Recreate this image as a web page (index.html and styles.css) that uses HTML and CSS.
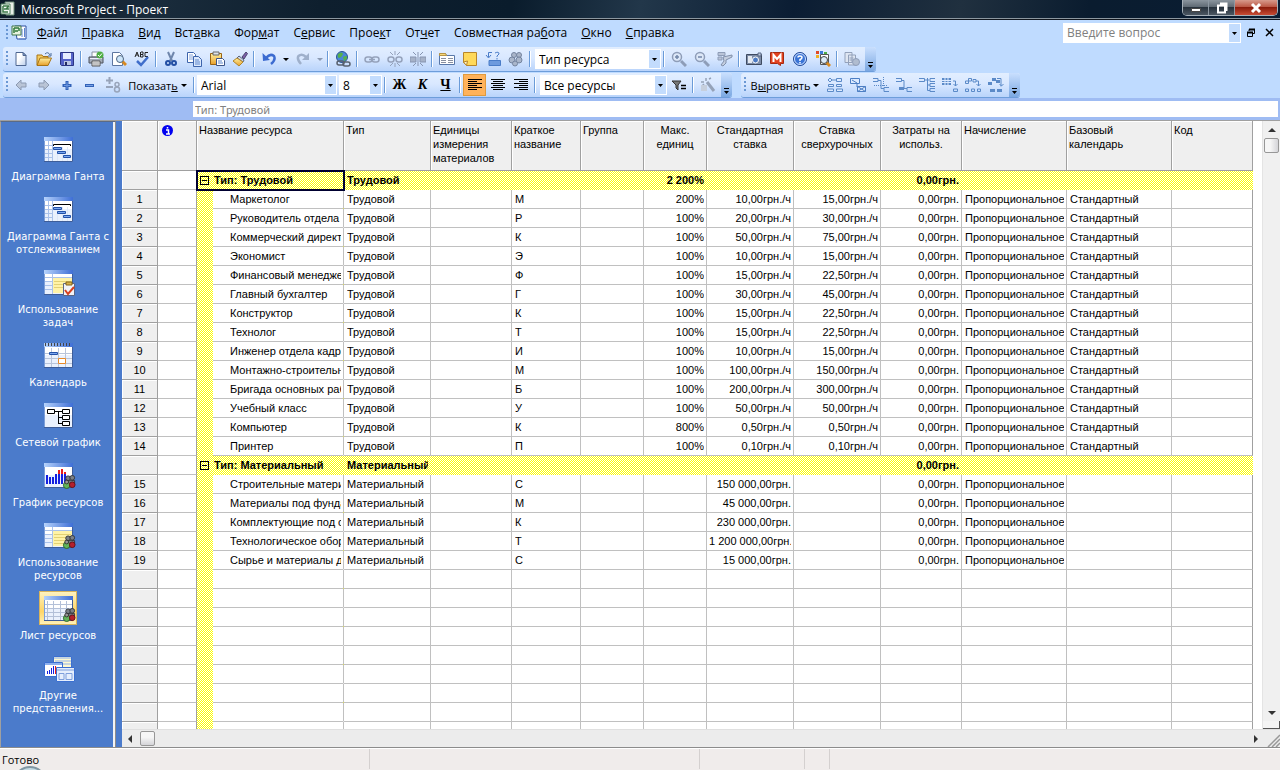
FILE: index.html
```
<!DOCTYPE html>
<html lang="ru">
<head>
    <meta charset="UTF-8">
    <meta name="viewport" content="width=device-width, initial-scale=1.0">
    <title>Microsoft Project - Проект</title>
    <link rel="stylesheet" href="styles.css">
</head>
<body>

<!-- icons -->
<svg class="sprite" aria-hidden="true">
  <defs>
    <linearGradient id="g-bar" x1="0" y1="0" x2="1" y2="0"><stop offset="0" stop-color="#b5d2fb"/><stop offset="1" stop-color="#3f6fd6"/></linearGradient>
    <linearGradient id="g-paper" x1="0" y1="0" x2="1" y2="1"><stop offset="0.4" stop-color="#fff"/><stop offset="1" stop-color="#b9cdec"/></linearGradient>
    <linearGradient id="g-gold" x1="0" y1="0" x2="0" y2="1"><stop offset="0" stop-color="#fff0a0"/><stop offset="1" stop-color="#e79f2a"/></linearGradient>
  </defs>
  <symbol id="i-app" viewBox="0 0 16 16"><path d="M5 1h9v13H6z" fill="#e8efe8" stroke="#6c8c78"/><path d="M1 3h9v10H1z" fill="#f4fbf4" stroke="#4f7e5c"/><path d="M3 5h6M3 5v6h5M4 8h5M9 5l-3 3" stroke="#3c7a48" stroke-width="1.5" fill="none"/></symbol>
  <symbol id="i-doc" viewBox="0 0 16 16"><path d="M4 1h11v13H6z" fill="#fff" stroke="#2c4f9e"/><path d="M13.500 3v9M11 4v8M8 14h7" stroke="#5c86d2"/><path d="M1 1h9v9H1z" fill="#e8f3e0" stroke="#3e7648"/><path d="M3 3h5M3 3v5M4 6h3M8 3v3" stroke="#317a3b" stroke-width="1.500" fill="none"/></symbol>
  <symbol id="i-new" viewBox="0 0 16 16"><path d="M3 1.500h7l3 3v10H3z" fill="url(#g-paper)" stroke="#4e6690"/><path d="M10 1.500v3h3z" fill="#8fa8d0" stroke="#4e6690"/></symbol>
  <symbol id="i-open" viewBox="0 0 16 16"><path d="M1 14V4h5l1 1.500h5V7" fill="#f4cc62" stroke="#a87414"/><path d="M1 14.500L4 7h11.500L12 14.500z" fill="url(#g-gold)" stroke="#a87414"/><path d="M9 3q3-3 5 1M15 2v3h-3" stroke="#4a6c9c" fill="none"/></symbol>
  <symbol id="i-save" viewBox="0 0 16 16"><path d="M1.500 1.500h13v13h-12l-1-1z" fill="#5462c8" stroke="#2a3584"/><path d="M4 2h8v6H4z" fill="#e6eeff"/><path d="M5 10h7v4H5z" fill="#b9c5e4"/><path d="M6 11h2v3H6z" fill="#222a60"/></symbol>
  <symbol id="i-print" viewBox="0 0 16 16"><path d="M4 1h7l1 5H4z" fill="#fff" stroke="#8892a4"/><path d="M1 6h14v6H1z" fill="#a3abb8" stroke="#4c535e"/><path d="M2 7.500h12" stroke="#eef"/><path d="M4 10h8v5H4z" fill="#fff" stroke="#555"/><path d="M5 12h6M5 14h6" stroke="#888"/><circle cx="12" cy="4" r="3.500" fill="#4fae45"/><path d="M10 4l1.500 1.500L14 2.500" stroke="#fff" fill="none"/></symbol>
  <symbol id="i-preview" viewBox="0 0 16 16"><path d="M1.500 1.500h7l3 3v10h-10z" fill="#fff" stroke="#5d76a0"/><path d="M11 10l4 4" stroke="#d88920" stroke-width="3"/><circle cx="9" cy="8" r="3.500" fill="#cfe7fb" stroke="#4d6480"/></symbol>
  <symbol id="i-spell" viewBox="0 0 16 16"><path d="M1 6l2-5 2 5M2 4h2M6.500 1v5H9V3.500H7M9 3V1H7M14 1.500h-3v4h3" fill="none" stroke="#222"/><path d="M3 10l4 4 7-8" stroke="#3f6ecb" stroke-width="2.500" fill="none"/></symbol>
  <symbol id="i-cut" viewBox="0 0 16 16"><path d="M5 1l4 9M11 1L7 10" stroke="#6f86ac" stroke-width="2"/><circle cx="5" cy="12" r="2" fill="none" stroke="#234fa4" stroke-width="2"/><circle cx="11" cy="12" r="2" fill="none" stroke="#234fa4" stroke-width="2"/></symbol>
  <symbol id="i-copy" viewBox="0 0 16 16"><path d="M1.500 1.500h6l2 2v8h-8z" fill="#fff" stroke="#3d64ac"/><path d="M3 4h4M3 6h4M3 8h4" stroke="#86a4da"/><path d="M7.500 5.500h5l3 3v7h-8z" fill="#dbe8fc" stroke="#3d64ac"/><path d="M9 9h4M9 11h5M9 13h5" stroke="#5d86cc"/></symbol>
  <symbol id="i-paste" viewBox="0 0 16 16"><path d="M1.500 2.500h11v11h-11z" fill="url(#g-gold)" stroke="#9a6414"/><path d="M4 1h6v3H4z" fill="#dce2ea" stroke="#666"/><path d="M7.500 7.500h6l2 2v5h-8z" fill="#fff" stroke="#3d5588"/><path d="M9 10h4M9 12h5" stroke="#5d86cc"/></symbol>
  <symbol id="i-brush" viewBox="0 0 16 16"><path d="M10 6l4-5 1.500 1.500L12 8z" fill="#7d5fa8" stroke="#4c4870"/><path d="M7 5l5 4-1 2-6-4z" fill="#cdd5e4" stroke="#59647c"/><path d="M5 7l6 4-4 4-6-5z" fill="url(#g-gold)" stroke="#b1852a"/></symbol>
  <symbol id="i-undo" viewBox="0 0 16 16"><path d="M5 7q4-5 8-2 2 4-3 8" stroke="#3c6bd0" stroke-width="2.500" fill="none"/><path d="M1.500 2l.5 8 7-1z" fill="#3c6bd0"/></symbol>
  <symbol id="i-redo" viewBox="0 0 16 16"><path d="M11 6Q7 2 3.500 5 1.500 8 6 13" stroke="#9fb0cb" stroke-width="2.500" fill="none"/><path d="M14 2v7H7z" fill="#9fb0cb"/></symbol>
  <symbol id="i-globe" viewBox="0 0 16 16"><circle cx="7" cy="6" r="5.500" fill="#4a86d8" stroke="#2a5494"/><path d="M3 3q4-3 5 0-1 3-4 4-2-1-1-4M8 6q4-2 4 0 0 3-3 4z" fill="#55b04a"/><rect x="2" y="10" width="7" height="4" rx="2" fill="none" stroke="#59616e" stroke-width="1.500"/><rect x="8" y="11" width="7" height="4" rx="2" fill="none" stroke="#59616e" stroke-width="1.500"/></symbol>
  <symbol id="i-link" viewBox="0 0 16 16"><g fill="none" stroke="#95a2bb" stroke-width="1.500"><rect x="1" y="6" width="7" height="5" rx="2.500"/><rect x="8" y="6" width="7" height="5" rx="2.500"/><path d="M5 8.500h6"/></g></symbol>
  <symbol id="i-unlink" viewBox="0 0 16 16"><g fill="none" stroke="#95a2bb"><rect x="1" y="6" width="6" height="5" rx="2.500" stroke-width="1.500"/><rect x="9" y="6" width="6" height="5" rx="2.500" stroke-width="1.500"/><path d="M8 0v4M3 1l3 3M13 1l-3 3M8 12v4M6 12l-3 3M10 12l3 3"/></g></symbol>
  <symbol id="i-split" viewBox="0 0 16 16"><path d="M0 6h6v5H0zM10 6h6v5h-6z" fill="#a6b2c8" stroke="#8795b1"/><path d="M8 1v14M3 1l3 3M13 1l-3 3M3 15l3-3M13 15l-3-3" stroke="#8795b1"/></symbol>
  <symbol id="i-form" viewBox="0 0 16 16"><path d="M.5 2.500h6l1 2h8v9H.5z" fill="#fff" stroke="#5877a8"/><path d="M.5 2.500h6l1 2h-7z" fill="#f7d77a" stroke="#b89545"/><path d="M2 7.500h5M9 7.500h5M2 9.500h5M9 9.500h5M2 11.500h5M9 11.500h5" stroke="#888fa0"/></symbol>
  <symbol id="i-note" viewBox="0 0 16 16"><path d="M1.500 1.500h13v13h-10l-3-3z" fill="#ffd95a" stroke="#b8862a"/><path d="M1.500 11l4-1-1 4.500z" fill="#fff6cc" stroke="#b8862a"/></symbol>
  <symbol id="i-assign" viewBox="0 0 16 16"><path d="M7 1.500H3.500V6M1 4l2.500 3L6 4M10 2q4-2 4 1l-2 2v1M12 7v1.500" fill="none" stroke="#4a7cc8"/><path d="M4 9.500h11.500v5H4z" fill="#6d9ade" stroke="#4a7cc8"/></symbol>
  <symbol id="i-people" viewBox="0 0 16 16"><g fill="#aab6ca" stroke="#74849f"><circle cx="6" cy="4" r="2.500"/><circle cx="11" cy="4" r="2.500"/><circle cx="4" cy="9" r="3"/><circle cx="11" cy="9" r="3"/><circle cx="7" cy="12.500" r="2.500"/></g></symbol>
  <symbol id="i-zoomin" viewBox="0 0 16 16"><circle cx="6" cy="6" r="4.500" fill="#dde8f8" stroke="#8e9db8" stroke-width="1.500"/><path d="M10 10l5 5" stroke="#8e9db8" stroke-width="3"/><path d="M4 6h4M6 4v4" stroke="#7286a8" stroke-width="1.500"/></symbol>
  <symbol id="i-zoomout" viewBox="0 0 16 16"><circle cx="6" cy="6" r="4.500" fill="#dde8f8" stroke="#8e9db8" stroke-width="1.500"/><path d="M10 10l5 5" stroke="#8e9db8" stroke-width="3"/><path d="M4 6h4" stroke="#7286a8" stroke-width="1.500"/></symbol>
  <symbol id="i-goto" viewBox="0 0 16 16"><path d="M1 1.500h7v3H1zM1 6h4v3H1z" fill="#b9c4d8" stroke="#8e9db8"/><path d="M6 6l9-2v2L9 9v3l-3 3-2-1 3-4z" fill="#c4cedf" stroke="#8190ab"/></symbol>
  <symbol id="i-camera" viewBox="0 0 16 16"><path d="M.5 3.500h15v10H.5z" fill="#7c8ba6" stroke="#3e4a60"/><path d="M2 5h4v7H2z" fill="#e4e9f0"/><circle cx="9.500" cy="9" r="3" fill="#4b7ac4" stroke="#fff"/><path d="M12 2h3v3h-3z" fill="#c3cddd" stroke="#5b6b88"/></symbol>
  <symbol id="i-m" viewBox="0 0 16 16"><path d="M1.500 1.500h13v11h-3v2l-3-2h-7z" fill="#e2421f" stroke="#a52a12"/><path d="M4.500 11V4L8 8l3.500-4v7" fill="none" stroke="#fff" stroke-width="2"/></symbol>
  <symbol id="i-help" viewBox="0 0 16 16"><circle cx="8" cy="8" r="6.500" fill="#3a74d6" stroke="#234a96"/><circle cx="8" cy="8" r="5.500" fill="none" stroke="#cfe0ff"/><path d="M6 6.500Q6 5 8 5t2 1.500-2 2V10M8 11v1.500" fill="none" stroke="#fff" stroke-width="1.500"/></symbol>
  <symbol id="i-find" viewBox="0 0 16 16"><path d="M5.500 3.500h8v10h-8z" fill="#fff" stroke="#555"/><path d="M1 0h3v3H1z" fill="#e04a28"/><path d="M5 0h3v3H5z" fill="#3c78d8"/><path d="M1 4h3v3H1z" fill="#f0b020"/><path d="M9 1h3v2H9z" fill="#4cab46"/><path d="M11 11l4 4" stroke="#d88920" stroke-width="3"/><circle cx="9" cy="9" r="3.500" fill="#dcebf8" stroke="#444"/></symbol>
  <symbol id="i-copyweb" viewBox="0 0 16 16"><path d="M1 1.500h7v10H1zM4.500 4h7v10h-7z" fill="#dfe6f2" stroke="#93a1ba"/><path d="M5.500 7h4M5.500 9h4" stroke="#93a1ba"/><circle cx="12" cy="11" r="3.500" fill="#b0bccf" stroke="#8e9db8"/></symbol>
  <symbol id="i-left" viewBox="0 0 16 16"><path d="M3 8l5-5v3h5v4H8v3z" fill="#b9c4d6" stroke="#8c9ab2"/></symbol>
  <symbol id="i-right" viewBox="0 0 16 16"><path d="M13 8L8 3v3H3v4h5v3z" fill="#b9c4d6" stroke="#8c9ab2"/></symbol>
  <symbol id="i-plus" viewBox="0 0 16 16"><path d="M8 4v9M3.500 8.500h9" stroke="#3262b8" stroke-width="3"/><path d="M8 5v7M5 8.500h6" stroke="#6e98e0"/></symbol>
  <symbol id="i-minus" viewBox="0 0 16 16"><path d="M3 8.500h9" stroke="#3262b8" stroke-width="3"/><path d="M4 8.500h7" stroke="#79a2e6"/></symbol>
  <symbol id="i-indic" viewBox="0 0 16 16"><path d="M4.500 0v7M1 3.500h7M1 10h7" stroke="#98a4ba" stroke-width="2"/><circle cx="12" cy="7.500" r="2" fill="none" stroke="#98a4ba" stroke-width="1.500"/><circle cx="12" cy="12.500" r="2.500" fill="none" stroke="#98a4ba" stroke-width="1.500"/></symbol>
  <symbol id="i-aleft" viewBox="0 0 16 16"><path d="M1 2.500h14M1 4.500h9M1 6.500h14M1 8.500h9M1 10.500h14M1 12.500h9" stroke="#000"/></symbol>
  <symbol id="i-acenter" viewBox="0 0 16 16"><path d="M1 2.500h14M3 4.500h10M1 6.500h14M3 8.500h10M1 10.500h14M3 12.500h10" stroke="#000"/></symbol>
  <symbol id="i-aright" viewBox="0 0 16 16"><path d="M1 2.500h14M6 4.500h9M1 6.500h14M6 8.500h9M1 10.500h14M6 12.500h9" stroke="#000"/></symbol>
  <symbol id="i-filter" viewBox="0 0 16 16"><path d="M1 4h9L7 8v5L5 11V8z" fill="#777" stroke="#333"/><path d="M10 8.500h5M10 11.500h5" stroke="#000" stroke-width="1.500"/></symbol>
  <symbol id="i-wand" viewBox="0 0 16 16"><path d="M7 5l7 9" stroke="#95a2b8" stroke-width="3"/><path d="M6 1v3M1 5h3M9 2l2-1M2 9l2-2" stroke="#95a2b8" stroke-width="1.500"/><path d="M1 8h6v6H1z" fill="#c6cfdd"/></symbol>
  <symbol id="i-al1" viewBox="0 0 16 16"><g fill="#dceaff" stroke="#5b8ac8"><path d="M3 1l2 2-2 2-2-2zM5 3h4M9.500 1.500h5v3h-5zM1.500 7.500h5v2h-5zM9.500 7.500h5v2h-5zM.5 12h6v2.500h-6zM9.500 12h6v2.500h-6z"/></g></symbol>
  <symbol id="i-al2" viewBox="0 0 16 16"><g fill="#dceaff" stroke="#4d7fc4"><path d="M.5 1.500h9v5h-9zM7.500 9.500h8v5h-8zM2 3l5 3v4M7.500 9.500l8 5M15.500 9.500l-8 5"/></g></symbol>
  <symbol id="i-al3" viewBox="0 0 16 16"><g fill="none" stroke="#5b8ac8"><path d="M0 1.500h5v3H0M5 3.500h3v8h3M16 10.500h-5v4h5"/><path d="M10.500 0v9M1 8.500h14" stroke-dasharray="1 1"/></g></symbol>
  <symbol id="i-al4" viewBox="0 0 16 16"><g fill="none" stroke="#5b8ac8"><path d="M0 1.500h5.500v3H0M6 3.500h2v8h3M16 10.500h-5v4h5"/></g><path d="M3 10h5v3H3z" fill="#5b8ac8"/></symbol>
  <symbol id="i-al5" viewBox="0 0 16 16"><g fill="none" stroke="#5b8ac8"><path d="M0 1.500h5.500v3H0M6 3h4M8.500 1v12.500H11M16 1.500h-5v3h5M16 6.500h-5v3h5M16 11.500h-5v3h5M8.500 8H11"/></g></symbol>
  <symbol id="i-al6" viewBox="0 0 16 16"><path d="M0 1h9v7H0z" fill="#5b8ac8"/><path d="M0 3.500h9M0 5.500h9M3 1v7M6 1v7" stroke="#dceaff"/><path d="M11 4h2.500v5M11.500 7l2 2 2-2M11.500 12h4v2.500h-4z" stroke="#5b8ac8" fill="none"/></symbol>
  <symbol id="i-al7" viewBox="0 0 16 16"><path d="M.5 4h3v2.500h-3zM3.500 1.500h3V4h-3zM8 2.500h3V5H8zM11 4h2.500v5M11.500 7l2 2 2-2M.5 12h3v2.500h-3zM6.500 12h3v2.500h-3zM12.500 12h3v2.500h-3z" stroke="#5b8ac8" fill="none"/></symbol>
  <symbol id="i-al8" viewBox="0 0 16 16"><path d="M0 5h4v3H0zM4 1h4v3H4zM8 3h4v3H8zM2 12h5v3H2zM9 12h5v3H9z" fill="#5b8ac8"/><path d="M9 1.500h4v8M11.500 7l2 2 2-2" stroke="#5b8ac8" fill="none"/></symbol>

  <!-- view bar pictures -->
  <symbol id="v-win" viewBox="0 0 32 26"><path d="M.5.5h28v24H.5z" fill="#fff" stroke="#7d9fd8"/><path d="M1 12h27v12H1z" fill="#eaf1fd"/><path d="M0 0h29v4H0z" fill="url(#g-bar)"/><path d="M0 24.500h28.500V4" fill="none" stroke="#3e5d98"/></symbol>
  <symbol id="v-res" viewBox="0 0 14 15"><g fill="#7a7f86" stroke="#33363b"><circle cx="6" cy="3.500" r="2.500"/><circle cx="10.500" cy="3" r="2.500"/><path d="M4 6h9v3H4z"/></g><circle cx="4.500" cy="11" r="3.500" fill="#62b35a" stroke="#2c662c"/><circle cx="10.500" cy="10.500" r="3" fill="#b5202c" stroke="#661018"/><circle cx="4.500" cy="7.500" r="2" fill="#999" stroke="#333"/></symbol>
  <symbol id="v-gantt" viewBox="0 0 32 26"><use href="#v-win" width="32" height="26"/><path d="M1 8.500h7M1 12.500h7M1 16.500h7M1 20.500h7M4.500 4v20M8.500 4v20" stroke="#aac2ea"/><path d="M9.500 9V7.500h17V9" stroke="#000" fill="none"/><path d="M13.500 10v14M18.500 10v14M23.500 10v14" stroke="#dde7f7"/><g fill="#7ba7f0" stroke="#2351a8"><path d="M9.500 10.500h8v2h-8zM13.500 14.500h8v2h-8zM19.500 18.500h7v2h-7z"/></g></symbol>
  <symbol id="v-tasks" viewBox="0 0 32 26"><use href="#v-win" width="32" height="26"/><path d="M8 7h20v16H8z" fill="#fff3a8"/><path d="M1 7.500h27M1 11.500h7M1 15.500h7M1 19.500h7M8.500 4v20" stroke="#aac2ea"/><path d="M10 11.500h17M10 14.500h17M10 17.500h17" stroke="#e3d174"/><path d="M19.500 13.500h11v12h-11z" fill="#f1f3f8" stroke="#5a6684"/><path d="M22 12h6v3h-6z" fill="#d9b44c" stroke="#846318"/><path d="M21 20l3 4 6-7" fill="none" stroke="#d8401e" stroke-width="2"/></symbol>
  <symbol id="v-cal" viewBox="0 0 32 26"><use href="#v-win" width="32" height="26"/><path d="M1 10.500h27M1 15.500h27M1 20.500h27M7.500 5v19M14.500 5v19M21.500 5v19" stroke="#b8c4da"/><path d="M1.500 0v3M4.500 0v3M7.500 0v3M10.500 0v3M13.500 0v3M16.500 0v3M19.500 0v3M22.500 0v3M25.500 0v3" stroke="#444"/><path d="M5.500 9.500h8v2h-8z" fill="#7ba7f0" stroke="#2351a8"/><path d="M14.500 15.500h7v5h-7z" fill="#fff" stroke="#e88a28"/></symbol>
  <symbol id="v-net" viewBox="0 0 32 26"><use href="#v-win" width="32" height="26"/><g fill="#fff" stroke="#000"><path d="M11 8.500h7M14.500 8v12M14 14.500h4M14 20.500h4" fill="none"/><path d="M3.500 6.500h7v4h-7zM18.500 6.500h7v4h-7zM18.500 12.500h7v4h-7zM18.500 18.500h7v4h-7z"/></g></symbol>
  <symbol id="v-graph" viewBox="0 0 32 26"><use href="#v-win" width="32" height="26"/><path d="M3 21v-9M6 21v-7M9 21v-7M12 21v-10M15 21V11M18 21V11M21 21V11" stroke="#1420e0" stroke-width="2"/><path d="M15 11V7M18 11V6M21 11V9" stroke="#e81c1c" stroke-width="2"/><use href="#v-res" x="18" y="12" width="14" height="14"/></symbol>
  <symbol id="v-usage" viewBox="0 0 32 26"><use href="#v-win" width="32" height="26"/><path d="M8 7h20v16H8z" fill="#fff3a8"/><path d="M1 7.500h27M1 11.500h7M1 15.500h7M1 19.500h7M8.500 4v20" stroke="#aac2ea"/><path d="M10 11.500h17M10 14.500h17M10 17.500h17M10 20.500h17" stroke="#e3d174"/><use href="#v-res" x="18" y="12" width="14" height="14"/></symbol>
  <symbol id="v-sheet" viewBox="0 0 32 26"><use href="#v-win" width="32" height="26"/><path d="M1 8.500h27M1 12.500h27M1 16.500h27M1 20.500h27M3.500 5v19M9.500 5v19M16.500 5v19M22.500 5v19" stroke="#b3c0d8"/><use href="#v-res" x="18" y="12" width="14" height="14"/></symbol>
  <symbol id="v-more" viewBox="0 0 32 26"><path d="M9.500.5h18v14h-18z" fill="#fff9d0" stroke="#3b6fd0"/><path d="M10 2h17M11 5h16M11 8h16" stroke="#8db0ee"/><path d="M.5 6.500h18v14H.5z" fill="#fff" stroke="#3b6fd0"/><path d="M1 8h17" stroke="#8db0ee" stroke-width="2"/><path d="M3.500 18v-3M5.500 18v-4M7.500 18v-6M9.500 18v-8" stroke="#1420e0"/><path d="M11.500 18v-8" stroke="#e81c1c"/><path d="M12.500 11.500h18v14h-18z" fill="#e6effd" stroke="#3b6fd0"/><path d="M13 14h17M15 17.500h5v6h-5zM22 17.500h6v6h-6z" stroke="#7e9fdc" fill="none"/></symbol>
</svg>

<header class="titlebar">
  <svg class="icon"><use href="#i-app"/></svg>
  <span class="title-text">Microsoft Project - Проект</span>
  <div class="window-buttons">
    <button class="win-btn" aria-label="Свернуть"><svg width="12" height="12"><path d="M1.500 6.500h9v3h-9z" fill="#fff" stroke="#444"/></svg></button>
    <button class="win-btn" aria-label="Восстановить"><svg width="12" height="12"><path d="M4 1.500h6.500V9M2 3.500h7v7H2z" fill="none" stroke="#fff" stroke-width="2"/></svg></button>
    <button class="win-btn win-close" aria-label="Закрыть"><svg width="12" height="12"><path d="M2 2l8 8M10 2l-8 8" stroke="#fff" stroke-width="3"/></svg></button>
  </div>
</header>

<nav class="menubar">
  <span class="grip"></span>
  <svg class="icon doc-icon"><use href="#i-doc"/></svg>
  <a href="#"><u>Ф</u>айл</a>
  <a href="#"><u>П</u>равка</a>
  <a href="#"><u>В</u>ид</a>
  <a href="#">Вст<u>а</u>вка</a>
  <a href="#">Фор<u>м</u>ат</a>
  <a href="#">С<u>е</u>рвис</a>
  <a href="#">Прое<u>к</u>т</a>
  <a href="#">От<u>ч</u>ет</a>
  <a href="#">Совместная ра<u>б</u>ота</a>
  <a href="#"><u>О</u>кно</a>
  <a href="#"><u>С</u>правка</a>
  <select class="combo question" aria-label="Введите вопрос"><option>Введите вопрос</option></select>
  <button class="doc-btn" aria-label="Восстановить окно"><svg width="10" height="10"><path d="M3 3V1.500h5.500v4H7M1.500 4.500h5v4h-5z" fill="none" stroke="#000"/><path d="M3 1.500h6M1 4.500h6" stroke="#000" stroke-width="2"/></svg></button>
  <button class="doc-btn" aria-label="Закрыть окно"><svg width="10" height="10"><path d="M1 1l7 7M8 1L1 8" stroke="#000" stroke-width="1.500"/></svg></button>
</nav>

<div class="toolbar-row">
  <div class="toolbar">
    <span class="grip"></span>
    <button class="tool" aria-label="Создать"><svg class="icon"><use href="#i-new"/></svg></button>
    <button class="tool" aria-label="Открыть"><svg class="icon"><use href="#i-open"/></svg></button>
    <button class="tool" aria-label="Сохранить"><svg class="icon"><use href="#i-save"/></svg></button>
    <span class="sep"></span>
    <button class="tool" aria-label="Печать"><svg class="icon"><use href="#i-print"/></svg></button>
    <button class="tool" aria-label="Предварительный просмотр"><svg class="icon"><use href="#i-preview"/></svg></button>
    <button class="tool" aria-label="Орфография"><svg class="icon"><use href="#i-spell"/></svg></button>
    <span class="sep"></span>
    <button class="tool" aria-label="Вырезать"><svg class="icon"><use href="#i-cut"/></svg></button>
    <button class="tool" aria-label="Копировать"><svg class="icon"><use href="#i-copy"/></svg></button>
    <button class="tool" aria-label="Вставить"><svg class="icon"><use href="#i-paste"/></svg></button>
    <button class="tool" aria-label="Формат по образцу"><svg class="icon"><use href="#i-brush"/></svg></button>
    <span class="sep"></span>
    <button class="tool" aria-label="Отменить"><svg class="icon"><use href="#i-undo"/></svg></button>
    <button class="drop" aria-label="Список отмены"></button>
    <button class="tool" aria-label="Вернуть" disabled><svg class="icon"><use href="#i-redo"/></svg></button>
    <button class="drop" aria-label="Список возврата" disabled></button>
    <span class="sep"></span>
    <button class="tool" aria-label="Гиперссылка"><svg class="icon"><use href="#i-globe"/></svg></button>
    <span class="sep"></span>
    <button class="tool" aria-label="Связать задачи" disabled><svg class="icon"><use href="#i-link"/></svg></button>
    <button class="tool" aria-label="Разорвать связи" disabled><svg class="icon"><use href="#i-unlink"/></svg></button>
    <button class="tool" aria-label="Прервать задачу" disabled><svg class="icon"><use href="#i-split"/></svg></button>
    <span class="sep"></span>
    <button class="tool" aria-label="Сведения"><svg class="icon"><use href="#i-form"/></svg></button>
    <button class="tool" aria-label="Заметки"><svg class="icon"><use href="#i-note"/></svg></button>
    <button class="tool" aria-label="Назначить"><svg class="icon"><use href="#i-assign"/></svg></button>
    <button class="tool" aria-label="Ресурсы" disabled><svg class="icon"><use href="#i-people"/></svg></button>
    <span class="sep"></span>
    <select class="combo group-by" aria-label="Группировка"><option>Тип ресурса</option></select>
    <span class="sep"></span>
    <button class="tool" aria-label="Увеличить" disabled><svg class="icon"><use href="#i-zoomin"/></svg></button>
    <button class="tool" aria-label="Уменьшить" disabled><svg class="icon"><use href="#i-zoomout"/></svg></button>
    <button class="tool" aria-label="Перейти к задаче" disabled><svg class="icon"><use href="#i-goto"/></svg></button>
    <span class="sep"></span>
    <button class="tool" aria-label="Копировать рисунок"><svg class="icon"><use href="#i-camera"/></svg></button>
    <button class="tool" aria-label="Макрос"><svg class="icon"><use href="#i-m"/></svg></button>
    <button class="tool" aria-label="Помощь"><svg class="icon"><use href="#i-help"/></svg></button>
    <button class="tool" aria-label="Поиск"><svg class="icon"><use href="#i-find"/></svg></button>
    <span class="sep"></span>
    <button class="tool" aria-label="Опубликовать" disabled><svg class="icon"><use href="#i-copyweb"/></svg></button>
    <button class="more" aria-label="Параметры панели"></button>
  </div>
</div>

<div class="toolbar-row">
  <div class="toolbar">
    <span class="grip"></span>
    <button class="tool" aria-label="Влево" disabled><svg class="icon"><use href="#i-left"/></svg></button>
    <button class="tool" aria-label="Вправо" disabled><svg class="icon"><use href="#i-right"/></svg></button>
    <button class="tool" aria-label="Показать подзадачи"><svg class="icon"><use href="#i-plus"/></svg></button>
    <button class="tool" aria-label="Скрыть подзадачи"><svg class="icon"><use href="#i-minus"/></svg></button>
    <button class="tool" aria-label="Скрыть назначения" disabled><svg class="icon"><use href="#i-indic"/></svg></button>
    <button class="text-tool show-tool"><span>Показат<u>ь</u></span></button>
    <span class="sep"></span>
    <select class="combo font-name" aria-label="Шрифт"><option>Arial</option></select>
    <select class="combo font-size" aria-label="Размер"><option>8</option></select>
    <span class="sep"></span>
    <button class="tool letter"><b>Ж</b></button>
    <button class="tool letter"><i>К</i></button>
    <button class="tool letter"><u>Ч</u></button>
    <span class="sep"></span>
    <button class="tool pressed" aria-label="По левому краю"><svg class="icon"><use href="#i-aleft"/></svg></button>
    <button class="tool" aria-label="По центру"><svg class="icon"><use href="#i-acenter"/></svg></button>
    <button class="tool" aria-label="По правому краю"><svg class="icon"><use href="#i-aright"/></svg></button>
    <span class="sep"></span>
    <select class="combo filter-by" aria-label="Фильтр"><option>Все ресурсы</option></select>
    <button class="tool" aria-label="Автофильтр"><svg class="icon"><use href="#i-filter"/></svg></button>
    <span class="sep"></span>
    <button class="tool" aria-label="Мастер диаграмм" disabled><svg class="icon"><use href="#i-wand"/></svg></button>
    <button class="more" aria-label="Параметры панели"></button>
  </div>
  <div class="toolbar">
    <span class="grip"></span>
    <button class="text-tool align-tool"><span>В<u>ы</u>ровнять</span></button>
    <button class="tool" aria-label="Расположить"><svg class="icon"><use href="#i-al1"/></svg></button>
    <button class="tool" aria-label="Скрыть поля"><svg class="icon"><use href="#i-al2"/></svg></button>
    <button class="tool" aria-label="Разрывы страниц"><svg class="icon"><use href="#i-al3"/></svg></button>
    <button class="tool" aria-label="Суммарные задачи"><svg class="icon"><use href="#i-al4"/></svg></button>
    <button class="tool" aria-label="Линии связи"><svg class="icon"><use href="#i-al5"/></svg></button>
    <button class="tool" aria-label="Макет"><svg class="icon"><use href="#i-al6"/></svg></button>
    <button class="tool" aria-label="Макет связанных"><svg class="icon"><use href="#i-al7"/></svg></button>
    <button class="tool" aria-label="Макет выделенных"><svg class="icon"><use href="#i-al8"/></svg></button>
    <button class="more" aria-label="Параметры панели"></button>
  </div>
</div>

<div class="entry-bar">
  <input class="entry" type="text" aria-label="Строка ввода" value="Тип: Трудовой">
</div>

<main class="workspace">
  <nav class="view-bar">
    <a href="#"><span class="pic"><svg><use href="#v-gantt"/></svg></span>Диаграмма Ганта</a>
    <a href="#"><span class="pic"><svg><use href="#v-gantt"/></svg></span>Диаграмма Ганта с<br>отслеживанием</a>
    <a href="#"><span class="pic"><svg><use href="#v-tasks"/></svg></span>Использование<br>задач</a>
    <a href="#"><span class="pic"><svg><use href="#v-cal"/></svg></span>Календарь</a>
    <a href="#"><span class="pic"><svg><use href="#v-net"/></svg></span>Сетевой график</a>
    <a href="#"><span class="pic"><svg><use href="#v-graph"/></svg></span>График ресурсов</a>
    <a href="#"><span class="pic"><svg><use href="#v-usage"/></svg></span>Использование<br>ресурсов</a>
    <a href="#" class="active"><span class="pic"><svg><use href="#v-sheet"/></svg></span>Лист ресурсов</a>
    <a href="#"><span class="pic"><svg><use href="#v-more"/></svg></span>Другие<br>представления...</a>
  </nav>

  <section class="sheet">
    <div class="sheet-body">
      <div class="grid-wrap">
        <table id="resources">
          <colgroup>
            <col class="c-id"><col class="c-info"><col class="c-name"><col class="c-type"><col class="c-unit"><col class="c-short"><col class="c-group"><col class="c-max"><col class="c-rate"><col class="c-rate"><col class="c-cost"><col class="c-accrue"><col class="c-cal"><col>
          </colgroup>
          <thead>
            <tr>
              <th></th>
              <th><svg class="info" viewBox="0 0 11 11"><circle cx="5.500" cy="5.500" r="5.500" fill="#0000f0"/><path d="M4 5h2.500v4M4 9h4M5.500 2v1.500" stroke="#fff" stroke-width="1.500" fill="none"/></svg></th>
              <th>Название ресурса</th>
              <th>Тип</th>
              <th>Единицы<br>измерения<br>материалов</th>
              <th>Краткое<br>название</th>
              <th>Группа</th>
              <th class="mid">Макс.<br>единиц</th>
              <th class="mid">Стандартная<br>ставка</th>
              <th class="mid">Ставка<br>сверхурочных</th>
              <th class="mid">Затраты на<br>использ.</th>
              <th>Начисление</th>
              <th>Базовый<br>календарь</th>
              <th>Код</th>
            </tr>
          </thead>
          <tbody></tbody>
        </table>
      </div>
      <div class="vscroll">
        <span class="arrow up"></span>
        <span class="thumb"></span>
        <span class="arrow down"></span>
        <span class="splitter"></span>
      </div>
    </div>
    <div class="hscroll">
      <span class="arrow back"></span>
      <span class="thumb"></span>
      <span class="arrow next"></span>
      <svg class="resize" width="14" height="14"><path d="M2 14L14 2M6 14l8-8M10 14l4-4" stroke="#999" stroke-width="1.500"/></svg>
    </div>
  </section>
</main>

<footer class="statusbar">
  <span class="status-main">Готово</span>
  <span class="status-wide"></span>
  <span class="status-mid"></span>
  <span class="status-small"></span>
  <span class="status-rest"></span>
  <span class="orb"></span>
</footer>

<script>
// [название, краткое название, макс. единиц, стандартная ставка, ставка сверхурочных]
const work = [
  ['Маркетолог', 'М', '200%', '10,00', '15,00'],
  ['Руководитель отдела', 'Р', '100%', '20,00', '30,00'],
  ['Коммерческий директор', 'К', '100%', '50,00', '75,00'],
  ['Экономист', 'Э', '100%', '10,00', '15,00'],
  ['Финансовый менеджер', 'Ф', '100%', '15,00', '22,50'],
  ['Главный бухгалтер', 'Г', '100%', '30,00', '45,00'],
  ['Конструктор', 'К', '100%', '15,00', '22,50'],
  ['Технолог', 'Т', '100%', '15,00', '22,50'],
  ['Инженер отдела кадров', 'И', '100%', '10,00', '15,00'],
  ['Монтажно-строительная', 'М', '100%', '100,00', '150,00'],
  ['Бригада основных рабочих', 'Б', '100%', '200,00', '300,00'],
  ['Учебный класс', 'У', '100%', '50,00', '50,00'],
  ['Компьютер', 'К', '800%', '0,50', '0,50'],
  ['Принтер', 'П', '100%', '0,10', '0,10']
];
const material = [
  ['Строительные материалы', 'С', '150 000,00'],
  ['Материалы под фундамент', 'М', '45 000,00'],
  ['Комплектующие под сборку', 'К', '230 000,00'],
  ['Технологическое оборудование', 'Т', '1 200 000,00'],
  ['Сырье и материалы для', 'С', '15 000,00']
];

const tbody = document.querySelector('#resources tbody');
const rightCols = [7, 8, 9, 10];
let id = 0;

function addRow(cells, className) {
  const tr = document.createElement('tr');
  tr.className = className;
  cells.forEach((text, i) => {
    const td = document.createElement('td');
    if (rightCols.includes(i)) td.className = 'num';
    if (i === 0) td.className = 'id';
    if (i === 2) td.className = 'name';
    const div = document.createElement('div');
    div.textContent = text;
    td.appendChild(div);
    tr.appendChild(td);
  });
  tbody.appendChild(tr);
}

addRow(['', '', 'Тип: Трудовой', 'Трудовой', '', '', '', '2 200%', '', '', '0,00грн.', '', '', ''], 'group selected');
work.forEach(r => {
  id++;
  addRow([id, '', r[0], 'Трудовой', '', r[1], '', r[2], r[3] + 'грн./ч', r[4] + 'грн./ч', '0,00грн.', 'Пропорциональное', 'Стандартный', ''], 'item');
});
addRow(['', '', 'Тип: Материальный', 'Материальный', '', '', '', '', '', '', '0,00грн.', '', '', ''], 'group');
material.forEach(r => {
  id++;
  addRow([id, '', r[0], 'Материальный', '', r[1], '', '', r[2] + 'грн.', '', '0,00грн.', 'Пропорциональное', '', ''], 'item');
});
// empty rows down to the bottom of the sheet
for (let i = 0; i < 40; i++) {
  addRow(Array(14).fill(''), 'item');
}
</script>

</body>
</html>
```
FILE: styles.css
```
* {
  box-sizing: border-box;
}

body {
  margin: 0;
  height: 100vh;
  display: flex;
  flex-direction: column;
  overflow: hidden;
  background-color: #bfdbff;
  color: #000;
  font-family: "Open Sans", "Noto Sans", sans-serif;
  font-size: 12px;
}

button {
  border: 0;
  padding: 0;
  background: none;
  font-family: inherit;
  font-size: 12px;
  color: #000;
}

.sprite {
  position: absolute;
  width: 0;
  height: 0;
}

.icon {
  width: 16px;
  height: 16px;
  display: block;
  flex: none;
}

/* title bar */
.titlebar {
  flex: none;
  height: 20px;
  display: flex;
  align-items: center;
  padding-bottom: 1px;
  background: linear-gradient(100deg, #0c1a28 0%, #1a2c3c 12%, #0e1f2e 25%, #0a1c2c 40%, #22374a 50%, #0b1d33 62%, #20303f 75%, #0a1c2f 85%, #0a1d33 100%);
  border-bottom: 1px solid #10151c;
  box-shadow: inset 0 -1px 0 #8c979f;
}
.title-text {
  color: white;
  margin-left: 5px;
  flex: 1;
}
.window-buttons {
  display: flex;
  align-self: flex-start;
  height: 16px;
  margin-right: 2px;
  border: 1px solid #a6b0b8;
  border-top: 0;
  border-radius: 0 0 5px 5px;
  overflow: hidden;
}
.win-btn {
  width: 26px;
  display: flex;
  align-items: center;
  justify-content: center;
  border-right: 1px solid #8d98a2;
  background: linear-gradient(#8b959e, #5b6670 50%, #27323d 50%, #4c5762);
}
.win-close {
  width: 42px;
  border-right: 0;
  background: linear-gradient(#d79a8c, #b8503d 50%, #8c1c0c 50%, #c84c34);
}

/* menu */
.menubar {
  flex: none;
  height: 27px;
  display: flex;
  align-items: center;
  padding: 0 1px 2px 3px;
}
.menubar a {
  color: #000;
  text-decoration: none;
  padding: 0 7px;
  white-space: nowrap;
}
.doc-icon {
  margin: 0 3px 0 2px;
}
.doc-btn {
  width: 19px;
  display: flex;
  justify-content: center;
}

.grip {
  flex: none;
  width: 6px;
  height: 16px;
  background: repeating-linear-gradient(#6b98d4 0 2px, transparent 2px 4px) 3px 0 / 2px 15px no-repeat;
}

.combo {
  appearance: none;
  flex: none;
  height: 20px;
  border: 1px solid #fff;
  border-radius: 0;
  padding: 0 14px 0 3px;
  font-family: inherit;
  font-size: 12px;
  color: #000;
  background: url("data:image/svg+xml,%3Csvg xmlns='http://www.w3.org/2000/svg' width='11' height='20'%3E%3Cpath d='M0 0h11v20H0z' fill='%23c3dcfd'/%3E%3Cpath d='M3 9h5L5.500 12z'/%3E%3C/svg%3E") right center no-repeat #fff;
}
.question {
  width: 178px;
  margin-left: auto;
  color: #808080;
}

/* toolbars */
.toolbar-row {
  flex: none;
  display: flex;
  gap: 9px;
  height: 26px;
  padding: 0 3px 1px;
}
.toolbar {
  display: flex;
  align-items: center;
  border-radius: 3px;
  background: linear-gradient(#e2eeff, #d9e8ff 45%, #b9d4fb);
  border-bottom: 1px solid #6d9dda;
}
.tool {
  flex: none;
  width: 23px;
  height: 22px;
  display: flex;
  align-items: center;
  justify-content: center;
}
.pressed {
  background-color: #ffb25a;
  border: 1px solid #e09a3c;
}
.letter {
  font-family: "Liberation Serif", serif;
  font-size: 14px;
  font-weight: bold;
}
.sep {
  flex: none;
  width: 6px;
  height: 16px;
  background: linear-gradient(90deg, #6a9bd8 50%, #fff 50%) 2px 0 / 2px 16px no-repeat;
}
.drop {
  width: 11px;
  height: 22px;
  display: flex;
  align-items: center;
  justify-content: center;
}
.drop::after,
.text-tool::after {
  content: "";
  border: 3px solid transparent;
  border-top-color: #000;
  border-bottom: 0;
}
.drop:disabled::after {
  border-top-color: #8c9ab2;
}
.text-tool {
  height: 22px;
  display: flex;
  align-items: center;
  justify-content: center;
  gap: 3px;
  font-size: 11px;
  white-space: nowrap;
}
.show-tool {
  width: 67px;
}
.align-tool {
  width: 76px;
}
.more {
  width: 11px;
  align-self: stretch;
  margin-left: 2px;
  border-radius: 0 3px 3px 0;
  background:
    url("data:image/svg+xml,%3Csvg xmlns='http://www.w3.org/2000/svg' width='7' height='9'%3E%3Cpath d='M1 1h5v1H1zM1 4h5L3.500 7z'/%3E%3C/svg%3E") center bottom 1px no-repeat,
    linear-gradient(#c9dffe, #7ba8e2);
}
.group-by {
  width: 126px;
  margin-left: 2px;
}
.font-name {
  width: 140px;
}
.font-size {
  width: 43px;
  margin-left: 2px;
}
.filter-by {
  width: 127px;
  margin-left: 2px;
}

.entry-bar {
  flex: none;
  height: 22px;
  margin-top: -1px;
  padding: 3px 2px 3px 193px;
  background-color: #9fbcf3;
}
.entry {
  display: block;
  width: 100%;
  height: 16px;
  border: 0;
  padding: 0 2px;
  color: #808080;
  font-family: "Noto Sans", sans-serif;
  font-size: 11px;
}

/* work area */
.workspace {
  flex: 1;
  min-height: 0;
  display: flex;
  background-color: #4b7bcb;
  border-top: 1px solid #a0a0a0;
}
.view-bar {
  flex: none;
  width: 116px;
  padding-top: 10px;
  border-left: 1px solid #a0a0a0;
  border-right: 1px solid #8c8c8c;
  border-top: 1px solid #5c6b84;
  box-shadow: inset -2px 0 0 #f4f4f4;
  font-family: "DejaVu Sans", sans-serif;
  font-size: 10px;
  line-height: 13px;
}
.view-bar a {
  display: flex;
  flex-direction: column;
  align-items: center;
  color: white;
  text-align: center;
  text-decoration: none;
  margin-bottom: 9px;
  white-space: nowrap;
}
.pic {
  width: 38px;
  height: 34px;
  padding: 4px 2px 2px 4px;
  margin-bottom: 4px;
  border: 1px solid transparent;
}
.pic svg {
  display: block;
  width: 32px;
  height: 26px;
}
.active .pic {
  border-color: #d8b45c;
  background: linear-gradient(#fdf2c0, #ffd566 60%, #fff2b8);
}

.sheet {
  flex: 1;
  min-width: 0;
  display: flex;
  flex-direction: column;
  margin-left: 6px;
  background-color: white;
}
.sheet-body {
  flex: 1;
  min-height: 0;
  display: flex;
}
.grid-wrap {
  flex: 1;
  min-width: 0;
  overflow: hidden;
  padding-right: 9px;
}

#resources {
  width: 100%;
  table-layout: fixed;
  border-collapse: separate;
  border-spacing: 0;
  font-family: "Liberation Sans", Arial, sans-serif;
  font-size: 11px;
}
.c-id { width: 36px; }
.c-info { width: 39px; }
.c-name { width: 147px; }
.c-type { width: 87px; }
.c-unit { width: 81px; }
.c-short { width: 69px; }
.c-group { width: 63px; }
.c-max { width: 63px; }
.c-rate { width: 87px; }
.c-cost { width: 81px; }
.c-accrue { width: 105px; }
.c-cal { width: 105px; }

#resources th {
  height: 50px;
  padding: 2px 1px 2px 2px;
  background-color: #efefef;
  border-right: 1px solid #a0a0a0;
  border-bottom: 1px solid #a0a0a0;
  box-shadow: inset 1px 1px 0 #fff;
  font-weight: normal;
  text-align: left;
  vertical-align: top;
  line-height: 14px;
  white-space: nowrap;
}
#resources th.mid {
  padding: 2px 1px;
  text-align: center;
}
.info {
  display: block;
  width: 11px;
  height: 11px;
  margin: 2px;
}

#resources td {
  height: 19px;
  padding: 0 2px 0 3px;
  line-height: 18px;
  border-right: 1px solid #c0c0c0;
  border-bottom: 1px solid #c0c0c0;
  white-space: nowrap;
}
#resources td div {
  overflow: hidden;
  height: 18px;
}
#resources td.num {
  padding: 0 2px;
  text-align: right;
}
#resources td.id {
  background-color: #efefef;
  border-color: #a0a0a0;
  box-shadow: inset 1px 1px 0 #fff;
  padding: 0 2px;
  text-align: center;
}
#resources td:last-child,
#resources td:nth-child(2) {
  border-right-color: #a0a0a0;
}

/* dotted yellow fill: group rows and the outline strip left of the names */
#resources .group td:nth-child(n+3),
#resources .item td.name {
  background-image: url("data:image/svg+xml,%3Csvg xmlns='http://www.w3.org/2000/svg' width='2' height='2' shape-rendering='crispEdges'%3E%3Cpath d='M0 0h2v2H0z' fill='%23fff'/%3E%3Cpath d='M1 0h1v1H1zM0 1h1v1H0z' fill='%23ff0'/%3E%3C/svg%3E");
  background-attachment: fixed;
}
#resources .item td.name {
  position: relative;
  z-index: 0;
  border-bottom-color: transparent;
  padding-left: 33px;
}
#resources .item td.name::before {
  content: "";
  position: absolute;
  z-index: -1;
  left: 16px;
  right: 0;
  top: 0;
  bottom: -1px;
  background-color: white;
  border-bottom: 1px solid #c0c0c0;
}

#resources .group td:nth-child(n+3) {
  border-right-color: transparent;
  border-bottom-color: transparent;
  font-weight: bold;
}
#resources .group td.name div {
  display: flex;
  align-items: center;
}
#resources .group td.name div::before {
  content: "";
  box-sizing: border-box;
  width: 9px;
  height: 9px;
  margin-right: 5px;
  border: 1px solid #000;
  background: linear-gradient(#000, #000) center / 5px 1px no-repeat;
}
#resources .selected td.name {
  position: relative;
  z-index: 1;
  outline: 2px solid #000030;
  outline-offset: -1px;
}

/* scrollbars */
.vscroll {
  flex: none;
  width: 18px;
  display: flex;
  flex-direction: column;
  align-items: center;
  background-color: #f0f0f0;
  border-left: 1px solid #e4e4e4;
  padding-top: 7px;
}
.hscroll {
  flex: none;
  height: 18px;
  display: flex;
  align-items: center;
  background-color: #ececec;
  border-top: 1px solid #e0e0e0;
  padding-left: 6px;
}
.arrow {
  border: 4px solid transparent;
}
.up {
  border-top: 0;
  border-bottom-color: #333;
}
.down {
  border-bottom: 0;
  border-top-color: #333;
  margin-top: auto;
}
.back {
  border-left: 0;
  border-right-color: #333;
}
.next {
  border-right: 0;
  border-left-color: #333;
  margin-left: auto;
}
.thumb {
  width: 15px;
  height: 15px;
  border: 1px solid #979797;
  border-radius: 2px;
  background: linear-gradient(90deg, #f6f6f6 40%, #d4d4d8);
}
.vscroll .thumb {
  margin-top: 6px;
}
.hscroll .thumb {
  margin-left: 8px;
  background: linear-gradient(#f6f6f6 40%, #d4d4d8);
}
.splitter {
  width: 100%;
  height: 8px;
  margin-top: 6px;
  background-color: #f4f4f4;
  border-right: 1px solid #555;
  border-bottom: 1px solid #555;
}
.resize {
  align-self: flex-end;
  margin-left: 8px;
}

.statusbar {
  flex: none;
  position: relative;
  height: 23px;
  display: flex;
  align-items: center;
  background-color: #f0eceb;
  border-top: 1px solid #8c8c8c;
  box-shadow: inset 0 1px 0 #fff;
  overflow: hidden;
}
.statusbar span {
  white-space: nowrap;
}
.status-main {
  flex: 1;
  padding: 1px 2px 0;
  font-size: 11px;
}
.status-wide,
.status-mid,
.status-small,
.status-rest {
  height: 20px;
  border-left: 1px solid #d4d0cf;
}
.status-wide {
  width: 330px;
}
.status-mid {
  width: 105px;
}
.status-small {
  width: 25px;
}
.status-rest {
  width: 451px;
}
/* start button peeking over the lower edge */
.orb {
  position: absolute;
  left: 13px;
  top: 18px;
  width: 34px;
  height: 34px;
  border-radius: 50%;
  border: 2px solid #7f97a4;
  background-color: #c5dbe4;
}
```
